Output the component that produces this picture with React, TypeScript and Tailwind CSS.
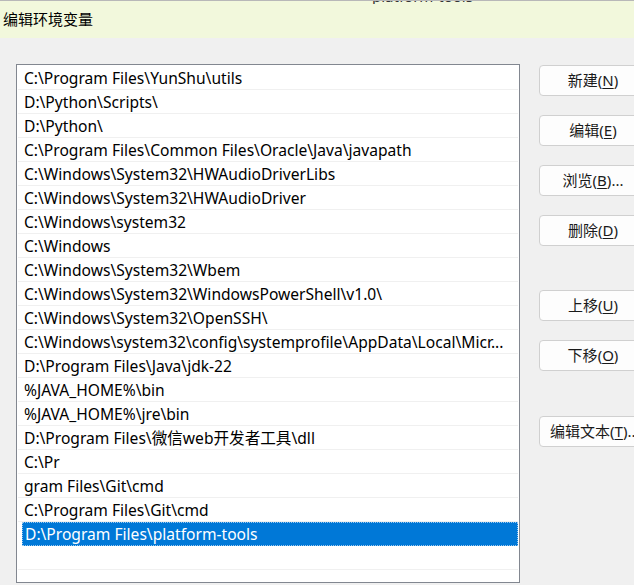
import React from "react";

const paths = [
  "C:\\Program Files\\YunShu\\utils",
  "D:\\Python\\Scripts\\",
  "D:\\Python\\",
  "C:\\Program Files\\Common Files\\Oracle\\Java\\javapath",
  "C:\\Windows\\System32\\HWAudioDriverLibs",
  "C:\\Windows\\System32\\HWAudioDriver",
  "C:\\Windows\\system32",
  "C:\\Windows",
  "C:\\Windows\\System32\\Wbem",
  "C:\\Windows\\System32\\WindowsPowerShell\\v1.0\\",
  "C:\\Windows\\System32\\OpenSSH\\",
  "C:\\Windows\\system32\\config\\systemprofile\\AppData\\Local\\Micr...",
  "D:\\Program Files\\Java\\jdk-22",
  "%JAVA_HOME%\\bin",
  "%JAVA_HOME%\\jre\\bin",
  "D:\\Program Files\\微信web开发者工具\\dll",
  "C:\\Pr",
  "gram Files\\Git\\cmd",
  "C:\\Program Files\\Git\\cmd",
  "D:\\Program Files\\platform-tools",
  "",
  "",
];

const SELECTED = 19;

interface BtnProps {
  label: string;
  hot: string;
  tail?: string;
  className?: string;
}

function Btn({ label, hot, tail = "", className = "" }: BtnProps) {
  return (
    <div
      className={`flex h-[31px] w-[108px] shrink-0 items-center justify-center whitespace-nowrap rounded-[4px] border border-[#d0d0d0] bg-[#fdfdfd] text-[15px] text-[#1a1a1a] ${className}`}
    >
      {label}(<span className="underline underline-offset-2">{hot}</span>){tail}
    </div>
  );
}

export default function App() {
  return (
    <div
      className="relative h-[585px] w-[634px] overflow-hidden bg-[#f0f0f0] text-[15px] text-black"
      style={{ fontFamily: '"Noto Sans", "Noto Sans CJK SC", sans-serif' }}
    >
      {/* title strip */}
      <div className="relative h-[38px] border-t border-[#b8b8b8] bg-[#f2f8dc] pl-[3px] pt-[6px] text-[15px] leading-[24px]">
        编辑环境变量
        <div className="absolute left-[372px] top-0 h-[3px] w-[104px] overflow-hidden">
          <span className="absolute left-0 top-[-14px] whitespace-nowrap text-[15px] leading-[18px] text-[#333]">
            platform-tools
          </span>
        </div>
      </div>

      <div className="flex pl-[16px] pt-[26px]">
        {/* path list */}
        <div className="h-[519px] w-[504px] shrink-0 overflow-hidden border border-[#828790] bg-white p-px text-[15.6px]">
          {paths.map((p, i) =>
            i === SELECTED ? (
              <div
                key={i}
                className="ml-[4px] h-[24px] whitespace-nowrap border border-dotted border-[#9cc8ee] bg-[#0078d7] pl-[2px] leading-[22px] text-white"
              >
                {p}
              </div>
            ) : (
              <div
                key={i}
                className="h-[24px] whitespace-nowrap border-b border-[#f0f0f0] pl-[6px] leading-[24px]"
              >
                {p}
              </div>
            ),
          )}
        </div>

        {/* buttons */}
        <div className="ml-[19px] flex flex-col pt-[1px]">
          <Btn label="新建" hot="N" />
          <Btn label="编辑" hot="E" className="mt-[19px]" />
          <Btn label="浏览" hot="B" tail="..." className="mt-[19px]" />
          <Btn label="删除" hot="D" className="mt-[19px]" />
          <Btn label="上移" hot="U" className="mt-[44px]" />
          <Btn label="下移" hot="O" className="mt-[19px]" />
          <Btn label="编辑文本" hot="T" tail="..." className="mt-[45px] justify-start pl-[10px]" />
        </div>
      </div>
    </div>
  );
}
